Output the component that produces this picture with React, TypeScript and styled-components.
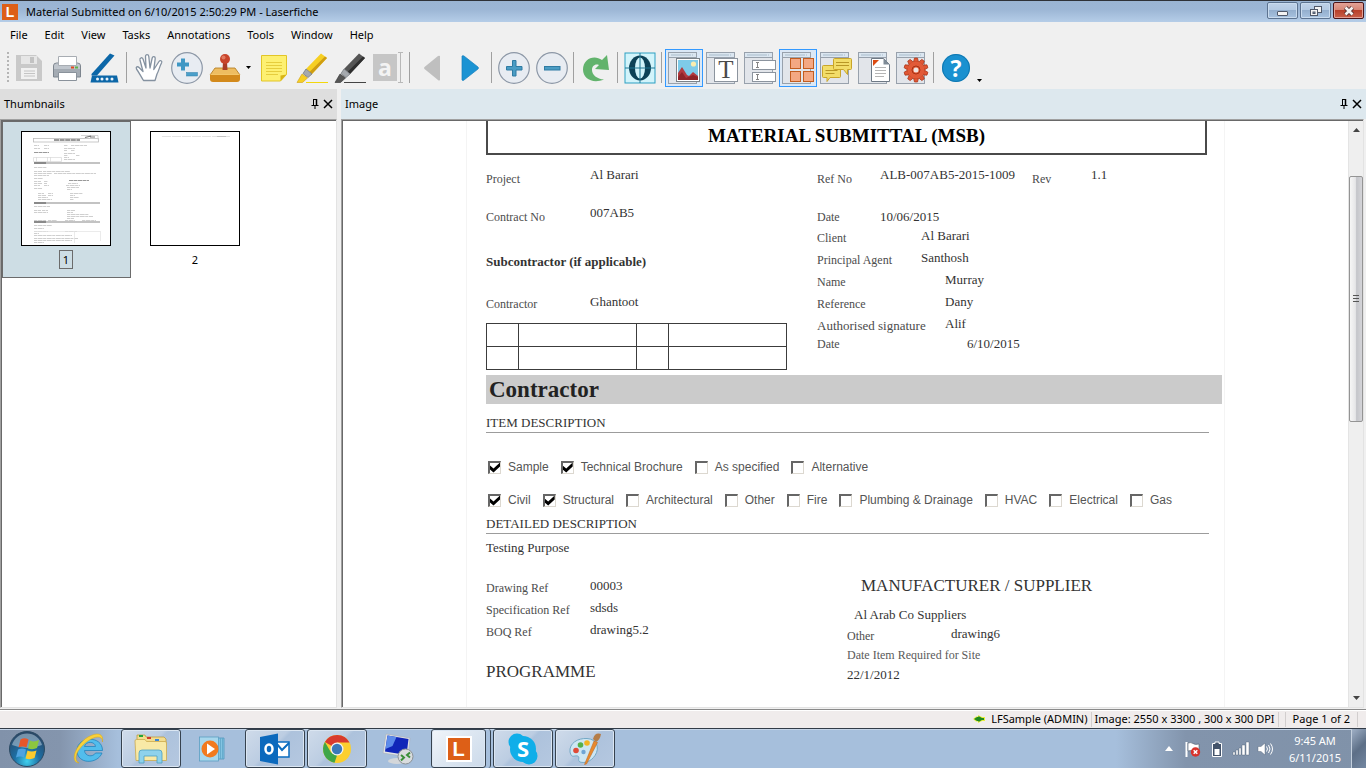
import React from "react";
import styled, { createGlobalStyle, css } from "styled-components";

const GlobalStyle = createGlobalStyle`
  *, *::before, *::after { box-sizing: border-box; }
  body { margin: 0; background: #f0f0f0; }
  button { margin: 0; padding: 0; border: 0; background: none; font: inherit; color: inherit; }
  svg { display: block; overflow: visible; }
`;

const serif = `"Liberation Serif", "Times New Roman", serif`;
const sans = `"Liberation Sans", Arial, sans-serif`;

/* ---------- window frame ---------- */

const Desktop = styled.div`
  display: flex;
  flex-direction: column;
  height: 100vh;
  overflow: hidden;
  font: 11px/16px "Noto Sans", "Open Sans", sans-serif;
  color: #000;
`;

const TitleBar = styled.header`
  display: flex;
  align-items: center;
  flex: none;
  height: 22px;
  padding: 0 2px;
  gap: 8px;
  border-top: 1px solid #2e3136;
  background: linear-gradient(#9ab4d2, #9cb6d5 40%, #b5cde8);
`;

const WindowTitle = styled.h1`
  flex: 1;
  margin: 0;
  font-size: 11px;
  font-weight: 400;
`;

const WindowButtons = styled.div`
  display: flex;
  align-self: flex-start;
  gap: 2px;
  padding-top: 1px;
`;

const WindowButton = styled.button<{ $close?: boolean }>`
  display: flex;
  align-items: center;
  justify-content: center;
  width: 31px;
  height: 17px;
  border: 1px solid ${(p) => (p.$close ? "#4c1519" : "#5c7390")};
  border-radius: 2px;
  box-shadow: inset 0 0 0 1px ${(p) => (p.$close ? "#e3a095" : "#c9dbee")};
  background: ${(p) =>
    p.$close
      ? "linear-gradient(#e2a397, #d68474 48%, #b8402a 50%, #c9604a)"
      : "linear-gradient(#bfd2e8, #b3c9e2 48%, #94afce 50%, #a8c3e0)"};
`;

const MenuBar = styled.nav`
  display: flex;
  flex: none;
  gap: 1px;
  height: 24px;
  padding: 0 2px;
  background: #f0f0f0;
`;

const MenuItem = styled.button`
  padding: 2px 8px 0;
`;

const ToolBar = styled.div`
  display: flex;
  flex: none;
  align-items: center;
  height: 43px;
  padding-left: 6px;
  background: #f0f0f0;
`;

const Grip = styled.span`
  width: 4px;
  height: 31px;
  background: repeating-linear-gradient(#b5b5b5 0 2px, transparent 2px 4px);
  border-left: 1px solid #f0f0f0;
  border-right: 1px solid #f0f0f0;
`;

const ToolButton = styled.button<{ $pressed?: boolean }>`
  display: flex;
  align-items: center;
  justify-content: center;
  flex: none;
  width: 38px;
  height: 38px;
  border: 1px solid ${(p) => (p.$pressed ? "#3399ff" : "transparent")};
  background: ${(p) => (p.$pressed ? "#dbe8f6" : "none")};
`;

const Separator = styled.span`
  flex: none;
  width: 6px;
  height: 31px;
  border-left: 2px solid #f0f0f0;
  background: linear-gradient(90deg, #a0a0a0 1px, transparent 1px);
`;

const DropArrow = styled.button<{ $low?: boolean }>`
  display: flex;
  align-items: center;
  flex: none;
  width: ${(p) => (p.$low ? 10 : 11)}px;
  height: 38px;
  padding: ${(p) => (p.$low ? "25px 0 0 2px" : "0 0 0 2px")};
`;

/* ---------- panels ---------- */

const Workspace = styled.main`
  display: flex;
  flex: 1;
  gap: 4px;
  min-height: 0;
  background: #f0f0f0;
`;

const Panel = styled.section<{ $narrow?: boolean }>`
  display: flex;
  flex-direction: column;
  flex: ${(p) => (p.$narrow ? "0 0 337px" : "1 1 0")};
  min-width: 0;
`;

const PanelHeader = styled.div<{ $active?: boolean }>`
  display: flex;
  align-items: center;
  flex: none;
  gap: 4px;
  height: 30px;
  padding: 0 4px;
  background: ${(p) => (p.$active ? "#dde8ee" : "#dedede")};
`;

const PanelTitle = styled.h2`
  flex: 1;
  margin: 0;
  font-size: 11px;
  font-weight: 400;
`;

const PanelButton = styled.button`
  padding: 0;
`;

const PanelBody = styled.div`
  display: flex;
  flex: 1;
  min-height: 0;
  padding: 1px 0 0 1px;
  border: 1px solid #e3e3e3;
  border-top-color: #a0a0a0;
  border-left-color: #a0a0a0;
  box-shadow: inset 1px 1px 0 #696969;
  background: #fff;
  margin-bottom: 1px;
`;

const ImageBody = styled(PanelBody)`
  margin-right: 2px;
`;

/* ---------- thumbnails ---------- */

const Thumb = styled.button<{ $selected?: boolean }>`
  display: flex;
  flex-direction: column;
  align-items: center;
  gap: 4px;
  width: 129px;
  height: 157px;
  padding: 9px 1px 0 0;
  border: 1px solid ${(p) => (p.$selected ? "#6b6b6b" : "transparent")};
  background: ${(p) => (p.$selected ? "#cddde4" : "none")};
`;

const ThumbPage = styled.span`
  width: 90px;
  height: 115px;
  border: 1px solid #000;
  background: #fff;
`;

const ThumbNumber = styled.span<{ $selected?: boolean }>`
  width: 14px;
  height: 19px;
  line-height: 17px;
  border: 1px solid ${(p) => (p.$selected ? "#6b6b6b" : "transparent")};
`;

/* ---------- document ---------- */

const Viewport = styled.div`
  display: flex;
  flex: 1;
  justify-content: center;
  min-width: 0;
  overflow: hidden;
`;

const Page = styled.article`
  flex: 0 1 759px;
  height: max-content;
  min-height: 100%;
  padding: 0 2px 0 19px;
  border: 1px solid #f4f4f4;
  border-width: 0 1px;
  font: 13px/18px ${serif};
  color: #333;
`;

const FormTitle = styled.h2`
  margin: 0 15px 11px 0;
  padding-bottom: 2px;
  border: 2px solid #4a4a4a;
  border-top: 0;
  font-size: 19px;
  line-height: 30px;
  text-align: center;
  color: #000;
`;

const Columns = styled.div<{ $left: number }>`
  display: grid;
  grid-template-columns: ${(p) => p.$left}px 1fr;
`;

const Column = styled.div<{ $top?: number }>`
  padding-top: ${(p) => p.$top ?? 0}px;
`;

const Field = styled.dl<{ $height?: number; $gap?: number }>`
  display: flex;
  height: ${(p) => p.$height ?? 20}px;
  margin: ${(p) => p.$gap ?? 0}px 0 0;
`;

const Label = styled.dt<{ $width: number; $large?: boolean }>`
  align-self: flex-end;
  flex: 0 0 ${(p) => p.$width}px;
  font-size: ${(p) => (p.$large ? 13 : 12)}px;
  color: #4c4c4c;
`;

const Value = styled.dd<{ $width?: number }>`
  margin: 0;
  ${(p) =>
    p.$width &&
    css`
      flex: 0 0 ${p.$width}px;
    `}
`;

const Subheading = styled.h3`
  margin: 27px 0 22px;
  font-size: 13px;
`;

const SignTable = styled.table`
  width: 301px;
  margin-top: 10px;
  border-collapse: collapse;
  table-layout: fixed;
  td { height: 23px; padding: 0; border: 1px solid #3c3c3c; }
  td:nth-child(odd) { width: 32px; }
`;

const Banner = styled.h2`
  margin: 5px 0 10px;
  padding: 0 3px;
  background: #cbcbcb;
  font-size: 23px;
  line-height: 29px;
  color: #222;
`;

const RuledHeading = styled.h3`
  margin: 0 13px 0 0;
  border-bottom: 1px solid #9c9c9c;
  font-size: 13px;
  font-weight: 400;
`;

const CheckRow = styled.div<{ $top: number; $bottom: number }>`
  display: flex;
  gap: 12px;
  height: 18px;
  margin: ${(p) => p.$top}px 0 ${(p) => p.$bottom}px 2px;
`;

const CheckLabel = styled.label`
  display: flex;
  align-items: center;
  gap: 7px;
  white-space: nowrap;
  font: 12px/18px ${sans};
  color: #555;
`;

const CheckBox = styled.input`
  appearance: none;
  position: relative;
  width: 13px;
  height: 13px;
  margin: 0;
  border: 1px solid #dcd8d0;
  border-top: 2px solid #666;
  border-left: 2px solid #666;
  background: #fff;
  &:checked::after {
    content: "";
    position: absolute;
    inset: 0;
    background: #000;
    clip-path: polygon(0 30%, 35% 60%, 100% 0, 100% 40%, 35% 100%, 0 70%);
  }
`;

const Paragraph = styled.p<{ $indent?: number; $top?: number; $muted?: boolean }>`
  margin: ${(p) => p.$top ?? 0}px 0 0;
  padding-left: ${(p) => p.$indent ?? 0}px;
  font-size: ${(p) => (p.$muted ? 12 : 13)}px;
  line-height: 20px;
  color: ${(p) => (p.$muted ? "#5a5a5a" : "#333")};
`;

const LargeHeading = styled.h3<{ $top?: number; $indent?: number }>`
  margin: ${(p) => p.$top ?? 0}px 0 0;
  padding-left: ${(p) => p.$indent ?? 0}px;
  font-size: 17px;
  font-weight: 400;
  line-height: 20px;
`;

const ScrollBar = styled.div`
  display: flex;
  flex-direction: column;
  flex: 0 0 15px;
  background: #efefef;
  border-left: 1px solid #e4e4e4;
`;

const ScrollArrow = styled.button`
  display: flex;
  align-items: center;
  justify-content: center;
  flex: none;
  height: 18px;
`;

const ScrollTrack = styled.div`
  flex: 1;
  padding-top: 37px;
`;

const ScrollThumb = styled.div`
  display: flex;
  align-items: center;
  justify-content: center;
  height: 48%;
  border: 1px solid #949494;
  border-radius: 2px;
  background: linear-gradient(90deg, #f6f6f6, #e6e6e8 45%, #c4c5ca 55%, #d5d5d9);
`;

/* ---------- status bar and task bar ---------- */

const StatusBar = styled.footer`
  display: flex;
  align-items: center;
  justify-content: flex-end;
  flex: none;
  height: 19px;
  padding-right: 8px;
  border-top: 1px solid #8a8a8a;
  box-shadow: inset 0 1px 0 #fff;
  background: #f0ecec;
`;

const StatusItem = styled.span<{ $pad?: number }>`
  display: flex;
  align-items: center;
  gap: 6px;
  height: 15px;
  padding: 0 ${(p) => p.$pad ?? 3}px;
  border-right: 1px solid #d2cece;
`;

const TaskBar = styled.div`
  display: flex;
  flex: none;
  height: 40px;
  border-top: 1px solid #323b47;
  box-shadow: inset 0 1px 0 #c5d5e8;
  background: linear-gradient(
    90deg,
    #8192aa 0,
    #8495ad 60px,
    #a6bfdc 118px,
    #a6bfdc calc(100% - 250px),
    #8294ac calc(100% - 180px),
    #8092a9 100%
  );
`;

const StartButton = styled.button`
  display: flex;
  align-items: center;
  width: 59px;
  padding-left: 8px;
`;

const TaskList = styled.div`
  display: flex;
  flex: 1;
  gap: 2px;
`;

const TaskButton = styled.button<{ $open?: boolean; $active?: boolean }>`
  display: flex;
  align-items: center;
  justify-content: center;
  width: 60px;
  height: 39px;
  border: 1px solid transparent;
  border-radius: 3px;
  ${(p) =>
    p.$open &&
    css`
      border-color: #36424f;
      box-shadow: inset 0 0 0 1px #dbe6f2;
      background: linear-gradient(135deg, #cfdbea, #bccde2 45%, #adc2dc 50%, #b5c8e0);
    `}
  ${(p) =>
    p.$active &&
    css`
      background: linear-gradient(135deg, #f1f5fa, #dce6f1 50%, #ccdaea);
    `}
`;

const TaskStack = styled.div`
  display: flex;
  width: 60px;
  padding-right: 4px;
  border-right: 1px solid #36424f;
  border-radius: 3px;
  ${TaskButton} { width: 55px; }
`;

const Tray = styled.div`
  display: flex;
  align-items: center;
  gap: 8px;
`;

const TrayButton = styled.button`
  display: flex;
  justify-content: center;
  width: 16px;
`;

const Clock = styled.time`
  width: 62px;
  margin: 0 -3px 0 3px;
  font-size: 11px;
  line-height: 17px;
  text-align: center;
  color: #fff;
`;

const ShowDesktop = styled.button`
  align-self: stretch;
  width: 15px;
  border: 1px solid #c3cfdd;
  border-width: 0 0 0 1px;
  background: linear-gradient(135deg, #9fb0c6, #5d6f87 50%, #7387a1);
`;

/* ---------- drawings ---------- */

const Icon = ({ children, size = 32 }: { children: React.ReactNode; size?: number }) => (
  <svg width={size} height={size} viewBox={`0 0 ${size} ${size}`} aria-hidden="true">
    {children}
  </svg>
);

const LogoMark = styled.span<{ $size: number }>`
  display: block;
  width: ${(p) => p.$size}px;
  height: ${(p) => p.$size}px;
  background: #dd5f17;
  font: 700 ${(p) => p.$size - 2}px/${(p) => p.$size}px ${sans};
  text-align: center;
  color: #fff;
`;

const SaveIcon = () => (
  <Icon>
    <path d="M3 3h20l6 6v20H3z" fill="#c9c9c9" />
    <rect x="8" y="4" width="16" height="8" fill="#e6e6e6" />
    <rect x="17" y="5" width="4" height="6" fill="#c2c2c2" />
    <rect x="8" y="16" width="16" height="11" fill="#f1f1f1" />
    <path d="M11 19h11M11 21.500h11M11 24h11" stroke="#c4c4c4" />
  </Icon>
);

const PrintIcon = () => (
  <Icon>
    <path d="M2.500 14q0-3 3-3h21q3 0 3 3v11h-27z" fill="#a4abb3" stroke="#7d858e" />
    <path d="M3 14q0-2.500 3-2.500h20q3 0 3 2.500v3H3z" fill="#c0c6cd" />
    <path d="M7.500 4.500h18v9h-18z" fill="#fff" stroke="#a8adb3" />
    <rect x="20" y="14.500" width="3" height="2" fill="#e2461f" />
    <rect x="24" y="14.500" width="3" height="2" fill="#5db24a" />
    <path d="M7.500 20.500h18v8h-18z" fill="#fff" stroke="#8a929b" />
  </Icon>
);

const ScanIcon = () => (
  <Icon>
    <path d="M21 1.500l4.500 2L8 23.500H2.500V22z" fill="#0c67a8" />
    <path d="M3 23.500h25l1.500 7H1.500z" fill="#0c67a8" />
    <g fill="#e9f3fb">
      <circle cx="8.500" cy="27" r="1.500" />
      <circle cx="13" cy="27" r="1.500" />
      <circle cx="18" cy="27" r="1.500" />
      <circle cx="23" cy="27" r="1.500" />
    </g>
  </Icon>
);

const HandIcon = () => (
  <Icon>
    <path
      d="M10.500 28.500C8 24.500 6 20.500 3.500 17c-1-2 1-3 2.500-1.500l4 4L7 8c-.5-2.500 2.500-3 3-1l3 9-.5-11.500c0-2.500 3-2.500 3.300 0L17 16l2.200-10c.5-2.200 3.300-1.700 3 .6L20.800 17.500l5.200-8c1.200-1.800 3.500-.7 2.600 1.300-2.500 5-2.500 7.200-4.600 11.200l-2 6.500z"
      fill="#fff"
      stroke="#8491a0"
      strokeWidth="1.300"
      strokeLinejoin="round"
    />
  </Icon>
);

const Disc = () => <circle cx="16" cy="16" r="15.300" fill="#e8ecf2" stroke="#8c97a6" strokeWidth="1.200" />;

const ZoomAdjustIcon = () => (
  <Icon>
    <Disc />
    <path d="M10 6.500h4v4h4v4h-4v4h-4v-4H6v-4h4z" fill="#3f97c4" />
    <rect x="15.500" y="20.500" width="11" height="3.500" fill="#4a9fca" stroke="#2f7fa9" strokeWidth=".5" />
  </Icon>
);

const StampIcon = () => (
  <Icon>
    <path d="M6 16h20l5 7H1z" fill="#eebd61" stroke="#ae7618" strokeWidth=".8" />
    <path d="M14 10h4l.5 8h-5z" fill="#a93c25" />
    <circle cx="16" cy="7" r="5" fill="#c8442a" />
    <circle cx="14.500" cy="5.500" r="2" fill="#e0795f" />
    <path d="M1 22h30v5q0 3-3 3H4q-3 0-3-3z" fill="#d38a1c" />
    <path d="M1.500 22.500h29" stroke="#f3c66a" />
  </Icon>
);

const NoteIcon = () => (
  <Icon>
    <path d="M3.500 3.500h25v19l-6 6.500h-19z" fill="#fdf071" stroke="#e2c527" />
    <path d="M28.500 22.500l-6 6.500v-5.500z" fill="#d8b516" />
    <path d="M8 10.500h16M8 13.500h16M8 16.500h16M8 19.500h16M8 22.500h12" stroke="#e6cd3d" />
  </Icon>
);

const MarkerIcon = ({ body, dark, line }: { body: string; dark: string; line: string }) => (
  <Icon>
    <path d="M25 1.500l6 4.500L16 22l-6-5z" fill={body} />
    <path d="M29 4.500l2 1.500L16 22l-2.500-2z" fill={dark} />
    <path d="M10 17l6 5-4 3.500-5-4z" fill="#a5a9ae" stroke="#767b81" strokeWidth=".8" />
    <path d="M6 22l5.500 4-5 4.500H1z" fill={body} stroke={dark} strokeWidth=".6" />
    <path d="M10 30.500h22" stroke={line} />
  </Icon>
);

const RedactTextIcon = () => (
  <Icon>
    <rect x="1" y="2" width="24" height="27" fill="#c6c6c6" />
    <text x="13" y="23.500" textAnchor="middle" fontFamily="Open Sans" fontWeight="700" fontSize="23" fill="#f3f3f3">
      a
    </text>
    <path d="M26 .5h5M26 30.500h5M28.500 1v29" stroke="#b8b8b8" />
  </Icon>
);

const PreviousIcon = () => (
  <Icon>
    <path d="M24 4v24q-1 1-2 0L8.500 17q-1-1 0-2L22 4q1-.7 2 0z" fill="#bfbfbf" />
  </Icon>
);

const NextIcon = () => (
  <Icon>
    <path d="M8 4v24q1 1 2 0l14-11q1-1 0-2L10 4q-1-.7-2 0z" fill="#1b93d3" stroke="#1580bd" strokeWidth=".7" />
  </Icon>
);

const ZoomInIcon = () => (
  <Icon>
    <Disc />
    <path d="M14.500 8.500h3.500v6h6v3.500h-6v6h-3.500v-6h-6v-3.500h6z" fill="#4a9cc4" stroke="#2f7ba3" />
  </Icon>
);

const ZoomOutIcon = () => (
  <Icon>
    <Disc />
    <rect x="8.500" y="14.500" width="15.500" height="3.500" fill="#4a9cc4" stroke="#2f7ba3" />
  </Icon>
);

const RefreshIcon = () => (
  <Icon>
    <path
      d="M22 8l5-5 2 15-14-1 4-4c-4-1.500-7 1-7 5 0 5 5 9 12 9.500C13 32 3 27 3 17.500 3 7 14 2 22 8z"
      fill="#62b36c"
    />
  </Icon>
);

const GlobeIcon = () => (
  <Icon>
    <rect x="1" y="1" width="30" height="30" fill="#d2f4fb" stroke="#2c9fc2" />
    <ellipse cx="16" cy="16" rx="11" ry="12.500" fill="#0d4257" />
    <ellipse cx="16" cy="16" rx="5" ry="10.500" fill="#d2f4fb" />
    <path d="M16 1v30M1 16h30" stroke="#1f7793" />
  </Icon>
);

const PaneFrame = () => (
  <>
    <rect x=".5" y=".5" width="28" height="31" fill="#e2e5ea" stroke="#98a1ac" />
    <rect x="1" y="1" width="27" height="4" fill="#dbe6f0" />
    <path d="M1 5.500h27" stroke="#98a1ac" />
    <path d="M3 3h22" stroke="#a9bccb" strokeDasharray="20 1" />
  </>
);

const PictureIcon = () => (
  <Icon>
    <PaneFrame />
    <rect x="8.500" y="6.500" width="23" height="23" fill="#fff" stroke="#7b8288" />
    <rect x="10" y="8" width="20" height="20" fill="#7ecbe9" />
    <circle cx="25.500" cy="12" r="2.600" fill="#f9edb0" />
    <path d="M10 28v-7l4-6 5 8 2 1 4-4 5 4v4z" fill="#b23a3f" />
    <path d="M10 28v-3l4-5 4 6 7-3 5 2v3z" fill="#8f2529" />
  </Icon>
);

const TextPaneIcon = () => (
  <Icon>
    <PaneFrame />
    <rect x="8.500" y="6.500" width="23" height="23" fill="#fff" stroke="#8c949e" />
    <text x="20" y="26" textAnchor="middle" fontFamily="Liberation Serif" fontSize="25" fill="#4a4a4a">
      T
    </text>
  </Icon>
);

const FieldsIcon = () => (
  <Icon>
    <PaneFrame />
    <rect x="8.500" y="8.500" width="23" height="9" fill="#fff" stroke="#8c949e" />
    <rect x="8.500" y="20.500" width="23" height="9" fill="#fff" stroke="#8c949e" />
    <path d="M12 10.500h3M12 15.500h3M13.500 11v4M12 22.500h3M12 27.500h3M13.500 23v4" stroke="#777" strokeWidth=".9" />
  </Icon>
);

const TilesIcon = () => (
  <Icon>
    <PaneFrame />
    <g fill="#f4a883" stroke="#c25d20">
      <rect x="8.500" y="6.500" width="10" height="10" />
      <rect x="21.500" y="6.500" width="10" height="10" />
      <rect x="8.500" y="19.500" width="10" height="10" />
      <rect x="21.500" y="19.500" width="10" height="10" />
    </g>
  </Icon>
);

const CommentsIcon = () => (
  <Icon>
    <PaneFrame />
    <g fill="#f2dd69" stroke="#c9a52a">
      <path d="M3.500 13.500h16q1 0 1 1v10q0 1-1 1h-9.500l-3 4v-4h-3.500q-1 0-1-1v-10q0-1 1-1z" />
      <path d="M14.500 6.500h16q1 0 1 1v9q0 1-1 1h-3v5l-4-5h-9q-1 0-1-1v-9q0-1 1-1z" />
    </g>
    <path d="M5.500 18.500h12M5.500 21.500h9M16 10.500h13M16 13.500h13" stroke="#b89725" />
  </Icon>
);

const DocumentIcon = () => (
  <Icon>
    <PaneFrame />
    <path d="M13.500 6.500h12l6 6v17h-18z" fill="#fff" stroke="#6e7985" />
    <path d="M25.500 6.500l6 6h-6z" fill="#7f8b97" />
    <path d="M15 8h6l-6 6z" fill="#dc4b12" />
    <path d="M17 15.500h11M17 18.500h11M17 21.500h11M17 24.500h9" stroke="#b5b5b5" />
  </Icon>
);

const GearIcon = () => (
  <Icon>
    <PaneFrame />
    <g transform="translate(20 18)">
      {[0, 36, 72, 108, 144, 180, 216, 252, 288, 324].map((a) => (
        <path key={a} d="M-2.500-8l1-4h3l1 4z" fill="#e05634" stroke="#a83214" strokeWidth=".7" transform={`rotate(${a})`} />
      ))}
      <circle r="8.500" fill="#e25a37" />
      <circle r="4" fill="none" stroke="#a83214" />
      <circle r="2.500" fill="#efe4e0" />
    </g>
  </Icon>
);

const HelpIcon = () => (
  <Icon>
    <circle cx="16" cy="16" r="14" fill="#1a91d0" />
    <circle cx="16" cy="16" r="13.500" fill="none" stroke="#1277af" />
    <text x="16" y="24.500" textAnchor="middle" fontFamily="Open Sans" fontWeight="700" fontSize="23" fill="#fff">
      ?
    </text>
  </Icon>
);

const Caret = () => (
  <svg width="5" height="3" viewBox="0 0 5 3" aria-hidden="true">
    <path d="M0 0h5L2.500 3z" fill="#000" />
  </svg>
);

const PinIcon = () => (
  <svg width="8" height="10" viewBox="0 0 8 10" aria-hidden="true">
    <path d="M2.500 0v6M2 .5h4M.5 6.500h7M4 7v3" stroke="#000" fill="none" />
    <path d="M5.500 0v6" stroke="#000" strokeWidth="1.500" />
  </svg>
);

const CloseIcon = () => (
  <svg width="10" height="8" viewBox="0 0 10 8" aria-hidden="true">
    <path d="M1 0l8 8M9 0L1 8" stroke="#000" strokeWidth="1.500" />
  </svg>
);

const MinimizeGlyph = () => (
  <svg width="12" height="10" viewBox="0 0 12 10" aria-hidden="true">
    <rect x=".5" y="5.500" width="10" height="4" rx=".5" fill="#f3f3f3" stroke="#50596a" />
  </svg>
);

const RestoreGlyph = () => (
  <svg width="12" height="12" viewBox="0 0 12 12" aria-hidden="true">
    <rect x="4.500" y="1.500" width="7" height="6" fill="#f3f3f3" stroke="#50596a" />
    <rect x=".5" y="4.500" width="7" height="6" fill="#f3f3f3" stroke="#50596a" />
    <rect x="3" y="7" width="2" height="1.500" fill="#9ab4d2" stroke="#50596a" />
  </svg>
);

const CloseGlyph = () => (
  <svg width="12" height="10" viewBox="0 0 12 10" aria-hidden="true">
    <path d="M2.500 1.500l7 7M9.500 1.500l-7 7" stroke="#533" strokeWidth="4.500" />
    <path d="M2.500 1.500l7 7M9.500 1.500l-7 7" stroke="#f5f3f2" strokeWidth="2.600" />
  </svg>
);

/* Reduced drawing of page 1: bars, rules and grey dashes standing for text runs. */
const thumbBars: number[] = [31, 71, 90];
const thumbLines: [number, number, number][] = [
  [12, 13, 5], [22, 13, 5], [42, 13, 4], [49, 13, 16], [12, 16, 6], [22, 16, 5], [42, 16, 11],
  [42, 18, 3], [49, 18, 4], [42, 21, 11], [42, 23, 4], [54, 23, 4],
  [42, 25, 5], [42, 27, 11], [12, 35, 13], [12, 39, 8], [21, 39, 27], [12, 41, 18], [32, 41, 42], [12, 43, 15],
  [12, 46, 9], [12, 49, 7], [22, 49, 4], [12, 51, 8], [22, 51, 3], [46, 51, 10], [12, 53, 6],
  [22, 53, 5], [44, 53, 14], [45, 55, 12], [12, 56, 8], [45, 57, 5], [16, 61, 6], [26, 61, 5], [48, 61, 13],
  [16, 63, 8], [26, 63, 5], [48, 63, 5], [16, 65, 10], [48, 65, 9], [16, 67, 14], [48, 67, 4], [12, 74, 16],
  [12, 78, 7], [20, 78, 6], [45, 78, 8], [12, 80, 14], [45, 80, 6], [45, 82, 22], [45, 84, 26], [45, 86, 7],
  [12, 88, 12], [26, 88, 9], [43, 88, 10], [60, 88, 14], [12, 93, 18], [12, 96, 10], [12, 99, 14], [43, 99, 12],
  [12, 101, 5], [12, 103, 38], [12, 106, 44], [12, 108, 38], [12, 110, 10],
];

const PageOneDrawing = () => (
  <svg width="88" height="113" viewBox="0 0 88 113" aria-hidden="true">
    <rect x="11.500" y="6.500" width="65" height="3.500" fill="none" stroke="#bbb" strokeWidth=".8" />
    <path d="M32 8h26" stroke="#777" strokeWidth="1.500" strokeDasharray="5 .6" />
    <path d="M59 3.500h17v4" stroke="#ccc" fill="none" strokeWidth=".8" />
    <path d="M63 5.500l6-1.500M68 5h5" stroke="#777" strokeWidth="1.200" />
    <path d="M12 20.500h15M47 48.500h20" stroke="#999" strokeDasharray="4 .5" />
    <path d="M11.500 25.500h28v4h-28zM14.500 25v5M25.500 25v5M28.500 25v5" fill="none" stroke="#d8d8d8" strokeWidth=".7" />
    {thumbLines.map(([x, y, w]) => (
      <path key={`${x}-${y}`} d={`M${x} ${y + 0.5}h${w}`} stroke="#cacaca" strokeWidth=".9" strokeDasharray="3 .6 5 .5" />
    ))}
    {thumbBars.map((y) => (
      <g key={y}>
        <rect x="12" y={y - 1} width="66" height="2" fill="#c3c3c3" />
        <rect x="12" y={y - 1} width="12" height="2" fill="#8a8a8a" />
      </g>
    ))}
    <path d="M52.500 99v12M78.500 99v10M12 99.500h66" stroke="#e2e2e2" strokeWidth=".7" fill="none" />
  </svg>
);

const PageTwoDrawing = () => (
  <svg width="88" height="113" viewBox="0 0 88 113" aria-hidden="true">
    <path d="M11 4.500h54M65 4.500h14" stroke="#e4e4e4" strokeDasharray="9 1" />
    <path d="M66 4.500h9" stroke="#c4c4c4" />
  </svg>
);

const StartOrb = () => (
  <svg width="38" height="38" viewBox="0 0 38 38" aria-hidden="true">
    <defs>
      <radialGradient id="orb" cx=".5" cy=".85" r=".8">
        <stop offset="0" stopColor="#3fd0ee" />
        <stop offset=".45" stopColor="#1d6ea3" />
        <stop offset="1" stopColor="#2a4868" />
      </radialGradient>
    </defs>
    <circle cx="19" cy="19" r="17.500" fill="url(#orb)" stroke="#2b4a63" />
    <path d="M4 15a15.500 15.500 0 0 1 30 0q-15 6-30 0z" fill="#c3d8e6" opacity=".5" />
    <path d="M12.500 9.500q4-2.500 8 0l-2 8q-4-2-8 0z" fill="#e8562a" />
    <path d="M22 10.500q4 2 9-.5l-2 8q-4 2-9 .5z" fill="#8cc63e" />
    <path d="M10 19.500q4-2 8 0l-2 8q-4-2-8 0z" fill="#4fa3e0" />
    <path d="M19.500 20.500q4 2 9 0l-2 7.500q-4 2-9 .5z" fill="#fbcb2e" />
  </svg>
);

const ExplorerBrowserIcon = () => (
  <svg width="32" height="34" viewBox="0 0 32 34" aria-hidden="true">
    <path
      d="M29.500 18.500H11.500c.3 6 8.500 7 11 2.500h6.500C24.500 32.500 4 32.500 4 18.500 4 4 29.500 3 29.500 18.500zM11.500 14.500h11c-.5-5.500-10-5.500-11 0z"
      fill="#52bdec"
      stroke="#2384bd"
      strokeWidth=".8"
    />
    <path
      d="M6 31C-4 30 3 12 15 5c9-5 16-4 14.500 5C29.500 3 22 4 15 9 5 16-1 27 6 31z"
      fill="#f9d13c"
      stroke="#dba611"
      strokeWidth=".5"
    />
  </svg>
);

const FolderIcon = () => (
  <svg width="34" height="32" viewBox="0 0 34 32" aria-hidden="true">
    <path d="M3 5V2h8l1 2h18l2 2v6H3z" fill="#f3dd8e" stroke="#bd9d43" strokeWidth=".8" />
    <rect x="5" y="2" width="4" height="2" fill="#22a53a" />
    <rect x="13" y="4" width="4" height="2" fill="#d03a2b" />
    <rect x="21" y="6" width="4" height="2" fill="#3a86d8" />
    <path d="M1 8q0-1.500 1.500-1.500H11l1.500 2H31q1.500 0 1.500 1.500v17.500H2z" fill="#f8e9a6" stroke="#cba94c" strokeWidth=".8" />
    <path d="M5 30V20q0-3 3-3h17q3 0 3 3v10h-5v-7H10v7z" fill="#8ed2ec" stroke="#4c9ec1" strokeWidth=".8" />
  </svg>
);

const MediaIcon = () => (
  <svg width="30" height="28" viewBox="0 0 30 28" aria-hidden="true">
    <path d="M18 3h8v21h-8z" fill="#83c4e2" stroke="#5197bd" strokeWidth=".8" />
    <path d="M22.500 3v21M24.500 3v21" stroke="#5fa6c8" strokeWidth=".8" />
    <rect x="1.500" y="2" width="19" height="24" fill="#a8d7ec" stroke="#5b9fc2" strokeWidth=".8" />
    <circle cx="12" cy="14" r="8.500" fill="#f27a1e" />
    <path d="M9 8.500l8 5.500-8 5.500z" fill="#fff" />
  </svg>
);

const MailIcon = () => (
  <svg width="32" height="32" viewBox="0 0 32 32" aria-hidden="true">
    <path d="M16 9h14v15H16z" fill="#fff" stroke="#0a6cc0" strokeWidth="1.500" />
    <path d="M17 10l6 7 7-7" fill="none" stroke="#0a6cc0" strokeWidth="2" />
    <path d="M1 4l18-3.500v31L1 28z" fill="#0b69bd" />
    <ellipse cx="10" cy="16" rx="3.500" ry="4.500" fill="none" stroke="#fff" strokeWidth="2.500" />
  </svg>
);

const BrowserIcon = () => (
  <svg width="30" height="30" viewBox="0 0 30 30" aria-hidden="true">
    <circle cx="15" cy="15" r="14" fill="#fbcf2e" />
    <path d="M15 15L2.900 8A14 14 0 0 1 27.500 8.500H15z" fill="#d83a2d" />
    <path d="M2.900 8L9 18.500l6 3L12.500 28.800A14 14 0 0 1 2.900 8z" fill="#3fa648" />
    <circle cx="15" cy="15" r="6.500" fill="#f2f2f2" />
    <circle cx="15" cy="15" r="5.200" fill="#3a79b9" />
  </svg>
);

const RemoteIcon = () => (
  <svg width="32" height="32" viewBox="0 0 32 32" aria-hidden="true">
    <ellipse cx="14" cy="28" rx="9" ry="3" fill="#d4d7da" />
    <path d="M3 1l24 4-2 19-25-4z" fill="#e1e4e8" stroke="#a9aeb4" strokeWidth=".6" />
    <path d="M4.500 2.500l21 3.500-2 16-21.500-3.500z" fill="#1025b8" />
    <path d="M4.500 2.500l9 1.500-4 9-7 3z" fill="#5d8bea" />
    <circle cx="22.500" cy="23.500" r="7.500" fill="#d9dcde" stroke="#8b9196" />
    <path d="M18 22l3 2.500-3 3M27 19.500l-3 2.500 3 2.500" fill="none" stroke="#3a8f39" strokeWidth="2" />
  </svg>
);

const ChatIcon = () => (
  <svg width="30" height="32" viewBox="0 0 30 32" aria-hidden="true">
    <circle cx="9" cy="9" r="8.500" fill="#10aee9" />
    <circle cx="21" cy="23" r="8.500" fill="#10aee9" />
    <circle cx="15" cy="16" r="13" fill="#10aee9" />
    <text x="15" y="24" textAnchor="middle" fontFamily="Open Sans" fontWeight="700" fontSize="22" fill="#fff">
      S
    </text>
  </svg>
);

const PaletteIcon = () => (
  <svg width="34" height="34" viewBox="0 0 34 34" aria-hidden="true">
    <path
      d="M2 20C1 11 10 6 19 6.500c10 .5 13 9.500 8 17-4 6-10 8-15 6.500-3-1.500.5-5-2.500-6s-6 3-7.500-4z"
      fill="#cde6f3"
      stroke="#74a9c5"
    />
    <circle cx="8" cy="18.500" r="2.800" fill="#df4a36" />
    <circle cx="12.500" cy="13" r="2.800" fill="#55b04b" />
    <circle cx="19" cy="11" r="2.800" fill="#f2b424" />
    <circle cx="15.500" cy="20" r="2.200" fill="#6fa5d6" />
    <path d="M26 9l3.500 1.500L18.500 32l-2 .5z" fill="#e8892f" stroke="#b8651a" strokeWidth=".5" />
    <path d="M25 7q2-7 8-5-1 6-5 8z" fill="#b57d48" />
  </svg>
);

const LogoTile = styled.span`
  padding: 2px;
  background: #fff;
`;

const ConnectedIcon = () => (
  <svg width="12" height="8" viewBox="0 0 12 8" aria-hidden="true">
    <path d="M0 4l3-2.500h2V0l4 2h3v4H9L5 8V6.500H3z" fill="#e9ef3c" />
    <path d="M1 4l3-2h1.500V1L9 3h2v2H9L5.500 7V6H4z" fill="#1f8a1f" />
  </svg>
);

/* ---------- data ---------- */

const menus = ["File", "Edit", "View", "Tasks", "Annotations", "Tools", "Window", "Help"];

const sampleChecks: [string, boolean][] = [
  ["Sample", true],
  ["Technical Brochure", true],
  ["As specified", false],
  ["Alternative", false],
];

const tradeChecks: [string, boolean][] = [
  ["Civil", true],
  ["Structural", true],
  ["Architectural", false],
  ["Other", false],
  ["Fire", false],
  ["Plumbing & Drainage", false],
  ["HVAC", false],
  ["Electrical", false],
  ["Gas", false],
];

type RowProps = { label: string; value: string; width: number; height?: number; gap?: number; large?: boolean };

const FieldRow = ({ label, value, width, height, gap, large }: RowProps) => (
  <Field $height={height} $gap={gap}>
    <Label $width={width} $large={large}>
      {label}
    </Label>
    <Value>{value}</Value>
  </Field>
);

const Checks = ({ items }: { items: [string, boolean][] }) => (
  <>
    {items.map(([name, on]) => (
      <CheckLabel key={name}>
        <CheckBox type="checkbox" defaultChecked={on} />
        {name}
      </CheckLabel>
    ))}
  </>
);

const PanelControls = () => (
  <>
    <PanelButton aria-label="Auto hide">
      <PinIcon />
    </PanelButton>
    <PanelButton aria-label="Close pane">
      <CloseIcon />
    </PanelButton>
  </>
);

export default function App() {
  return (
    <>
      <GlobalStyle />
      <Desktop>
        <TitleBar>
          <LogoMark $size={16}>L</LogoMark>
          <WindowTitle>Material Submitted on 6/10/2015 2:50:29 PM - Laserfiche</WindowTitle>
          <WindowButtons>
            <WindowButton aria-label="Minimize"><MinimizeGlyph /></WindowButton>
            <WindowButton aria-label="Restore"><RestoreGlyph /></WindowButton>
            <WindowButton $close aria-label="Close"><CloseGlyph /></WindowButton>
          </WindowButtons>
        </TitleBar>

        <MenuBar>
          {menus.map((m) => (
            <MenuItem key={m}>{m}</MenuItem>
          ))}
        </MenuBar>

        <ToolBar>
          <Grip />
          <ToolButton aria-label="Save"><SaveIcon /></ToolButton>
          <ToolButton aria-label="Print"><PrintIcon /></ToolButton>
          <ToolButton aria-label="Scan"><ScanIcon /></ToolButton>
          <Separator />
          <ToolButton aria-label="Pan"><HandIcon /></ToolButton>
          <ToolButton aria-label="Zoom"><ZoomAdjustIcon /></ToolButton>
          <ToolButton aria-label="Stamp"><StampIcon /></ToolButton>
          <DropArrow aria-label="Choose stamp"><Caret /></DropArrow>
          <ToolButton aria-label="Sticky note"><NoteIcon /></ToolButton>
          <ToolButton aria-label="Highlight"><MarkerIcon body="#f6cf22" dark="#cf9d12" line="#f3d70c" /></ToolButton>
          <ToolButton aria-label="Redact"><MarkerIcon body="#555" dark="#2e2e2e" line="#444" /></ToolButton>
          <ToolButton aria-label="Highlight text"><RedactTextIcon /></ToolButton>
          <Separator />
          <ToolButton aria-label="Previous page"><PreviousIcon /></ToolButton>
          <ToolButton aria-label="Next page"><NextIcon /></ToolButton>
          <Separator />
          <ToolButton aria-label="Zoom in"><ZoomInIcon /></ToolButton>
          <ToolButton aria-label="Zoom out"><ZoomOutIcon /></ToolButton>
          <Separator />
          <ToolButton aria-label="Rotate"><RefreshIcon /></ToolButton>
          <Separator />
          <ToolButton aria-label="OCR"><GlobeIcon /></ToolButton>
          <Separator />
          <ToolButton $pressed aria-label="Image pane"><PictureIcon /></ToolButton>
          <ToolButton aria-label="Text pane"><TextPaneIcon /></ToolButton>
          <ToolButton aria-label="Fields pane"><FieldsIcon /></ToolButton>
          <ToolButton $pressed aria-label="Thumbnails pane"><TilesIcon /></ToolButton>
          <ToolButton aria-label="Annotations pane"><CommentsIcon /></ToolButton>
          <ToolButton aria-label="Document pane"><DocumentIcon /></ToolButton>
          <ToolButton aria-label="Processing pane"><GearIcon /></ToolButton>
          <Separator />
          <ToolButton aria-label="Help"><HelpIcon /></ToolButton>
          <DropArrow $low aria-label="Toolbar options"><Caret /></DropArrow>
        </ToolBar>

        <Workspace>
          <Panel $narrow>
            <PanelHeader>
              <PanelTitle>Thumbnails</PanelTitle>
              <PanelControls />
            </PanelHeader>
            <PanelBody>
              <Thumb $selected>
                <ThumbPage><PageOneDrawing /></ThumbPage>
                <ThumbNumber $selected>1</ThumbNumber>
              </Thumb>
              <Thumb>
                <ThumbPage><PageTwoDrawing /></ThumbPage>
                <ThumbNumber>2</ThumbNumber>
              </Thumb>
            </PanelBody>
          </Panel>

          <Panel>
            <PanelHeader $active>
              <PanelTitle>Image</PanelTitle>
              <PanelControls />
            </PanelHeader>
            <ImageBody>
              <Viewport>
                <Page>
                  <FormTitle>MATERIAL SUBMITTAL (MSB)</FormTitle>
                  <Columns $left={331}>
                    <Column>
                      <FieldRow label="Project" value="Al Barari" width={104} height={22} />
                      <FieldRow label="Contract No" value="007AB5" width={104} height={22} gap={16} />
                      <Subheading>Subcontractor (if applicable)</Subheading>
                      <FieldRow label="Contractor" value="Ghantoot" width={104} />
                      <SignTable>
                        <tbody>
                          <tr><td /><td /><td /><td /></tr>
                          <tr><td /><td /><td /><td /></tr>
                        </tbody>
                      </SignTable>
                    </Column>
                    <Column>
                      <Field $height={22}>
                        <Label $width={63}>Ref No</Label>
                        <Value $width={152}>ALB-007AB5-2015-1009</Value>
                        <Label $width={59}>Rev</Label>
                        <Value>1.1</Value>
                      </Field>
                      <FieldRow label="Date" value="10/06/2015" width={63} height={18} gap={20} />
                      <FieldRow label="Client" value="Al Barari" width={104} gap={1} />
                      <FieldRow label="Principal Agent" value="Santhosh" width={104} gap={2} />
                      <FieldRow label="Name" value="Murray" width={128} gap={2} />
                      <FieldRow label="Reference" value="Dany" width={128} gap={2} />
                      <FieldRow label="Authorised signature" value="Alif" width={128} gap={2} large />
                      <FieldRow label="Date" value="6/10/2015" width={150} height={18} />
                    </Column>
                  </Columns>
                  <Banner>Contractor</Banner>
                  <RuledHeading>ITEM DESCRIPTION</RuledHeading>
                  <CheckRow $top={25} $bottom={15}><Checks items={sampleChecks} /></CheckRow>
                  <CheckRow $top={15} $bottom={6}><Checks items={tradeChecks} /></CheckRow>
                  <RuledHeading>DETAILED DESCRIPTION</RuledHeading>
                  <Columns $left={361}>
                    <Column $top={4}>
                      <Paragraph>Testing Purpose</Paragraph>
                      <FieldRow label="Drawing Ref" value="00003" width={104} gap={19} />
                      <FieldRow label="Specification Ref" value="sdsds" width={104} gap={2} />
                      <FieldRow label="BOQ Ref" value="drawing5.2" width={104} gap={2} />
                      <LargeHeading $top={21}>PROGRAMME</LargeHeading>
                    </Column>
                    <Column $top={42}>
                      <LargeHeading $indent={14}>MANUFACTURER / SUPPLIER</LargeHeading>
                      <Paragraph $indent={7} $top={9}>Al Arab Co Suppliers</Paragraph>
                      <FieldRow label="Other" value="drawing6" width={104} />
                      <Paragraph $muted>Date Item Required for Site</Paragraph>
                      <Paragraph>22/1/2012</Paragraph>
                    </Column>
                  </Columns>
                </Page>
              </Viewport>
              <ScrollBar>
                <ScrollArrow aria-label="Scroll up">
                  <svg width="7" height="4" viewBox="0 0 7 4" aria-hidden="true"><path d="M0 4h7L3.500 0z" fill="#444" /></svg>
                </ScrollArrow>
                <ScrollTrack>
                  <ScrollThumb>
                    <svg width="6" height="8" viewBox="0 0 6 8" aria-hidden="true">
                      <path d="M0 .5h6M0 3.500h6M0 6.500h6" stroke="#555" />
                    </svg>
                  </ScrollThumb>
                </ScrollTrack>
                <ScrollArrow aria-label="Scroll down">
                  <svg width="7" height="4" viewBox="0 0 7 4" aria-hidden="true"><path d="M0 0h7L3.500 4z" fill="#444" /></svg>
                </ScrollArrow>
              </ScrollBar>
            </ImageBody>
          </Panel>
        </Workspace>

        <StatusBar>
          <StatusItem><ConnectedIcon />LFSample (ADMIN)</StatusItem>
          <StatusItem>Image: 2550 x 3300 , 300 x 300 DPI</StatusItem>
          <StatusItem />
          <StatusItem $pad={7}>Page 1 of 2</StatusItem>
        </StatusBar>

        <TaskBar>
          <StartButton aria-label="Start"><StartOrb /></StartButton>
          <TaskList>
            <TaskButton aria-label="Internet Explorer"><ExplorerBrowserIcon /></TaskButton>
            <TaskButton $open aria-label="Windows Explorer"><FolderIcon /></TaskButton>
            <TaskButton aria-label="Media Player"><MediaIcon /></TaskButton>
            <TaskButton $open aria-label="Outlook"><MailIcon /></TaskButton>
            <TaskButton $open aria-label="Chrome"><BrowserIcon /></TaskButton>
            <TaskButton aria-label="Remote Desktop"><RemoteIcon /></TaskButton>
            <TaskStack>
              <TaskButton $open $active aria-label="Laserfiche">
                <LogoTile><LogoMark $size={22}>L</LogoMark></LogoTile>
              </TaskButton>
            </TaskStack>
            <TaskButton $open aria-label="Skype"><ChatIcon /></TaskButton>
            <TaskButton $open aria-label="Paint"><PaletteIcon /></TaskButton>
          </TaskList>
          <Tray>
            <TrayButton aria-label="Show hidden icons">
              <svg width="8" height="5" viewBox="0 0 8 5" aria-hidden="true"><path d="M0 5h8L4 0z" fill="#fff" /></svg>
            </TrayButton>
            <TrayButton aria-label="Action Center">
              <svg width="16" height="16" viewBox="0 0 16 16" aria-hidden="true">
                <path d="M1.500 1v15" stroke="#fff" strokeWidth="2" />
                <path d="M3 2q3-1 5 .5t6 .5v7q-4 1-6 0t-5 0z" fill="#fff" stroke="#4a5868" strokeWidth=".6" />
                <circle cx="10.500" cy="11" r="4.700" fill="#d8332c" />
                <path d="M8.700 9.200l3.600 3.600M12.300 9.200l-3.600 3.600" stroke="#fff" strokeWidth="1.500" />
              </svg>
            </TrayButton>
            <TrayButton aria-label="Battery">
              <svg width="12" height="16" viewBox="0 0 12 16" aria-hidden="true">
                <path d="M4 1h4v1.500h2.500v13h-9v-13H4z" fill="#43536a" stroke="#fff" />
                <rect x="3.500" y="8" width="5" height="6" fill="#fff" />
              </svg>
            </TrayButton>
            <TrayButton aria-label="Network">
              <svg width="16" height="13" viewBox="0 0 16 13" aria-hidden="true">
                <path d="M0 10h2v3H0zM3 8h2v5H3zM6 6h2v7H6zM9 3h3v10H9zM13 0h3v13h-3z" fill="#fff" stroke="#4c5c70" strokeWidth=".4" />
              </svg>
            </TrayButton>
            <TrayButton aria-label="Volume">
              <svg width="16" height="14" viewBox="0 0 16 14" aria-hidden="true">
                <path d="M1 4.500h3L8 1v12L4 9.500H1z" fill="#fff" stroke="#4c5c70" strokeWidth=".4" />
                <path d="M9.500 4.500q2 2.500 0 5M11.500 3q3 4 0 8M13.500 1.500q4 5.500 0 11" fill="none" stroke="#fff" />
              </svg>
            </TrayButton>
            <Clock>
              9:45 AM
              <br />
              6/11/2015
            </Clock>
            <ShowDesktop aria-label="Show desktop" />
          </Tray>
        </TaskBar>
      </Desktop>
    </>
  );
}
